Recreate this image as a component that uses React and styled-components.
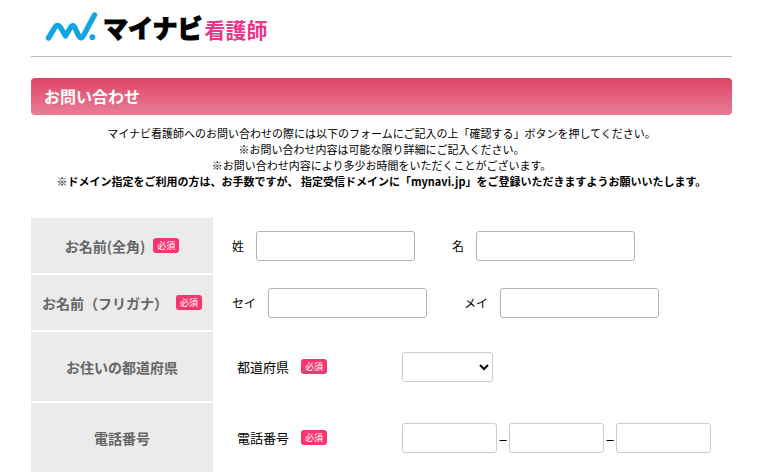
import React from 'react';
import styled, { createGlobalStyle } from 'styled-components';

const GlobalStyle = createGlobalStyle`
  * {
    box-sizing: border-box;
  }

  body {
    margin: 0;
    background-color: #fff;
    color: #000;
    font-family: 'Noto Sans CJK JP', 'Noto Sans', sans-serif;
    font-size: 12px;
  }
`;

const Page = styled.div`
  padding: 0 30px 0 31px;
`;

const Header = styled.header`
  height: 57px;
  border-bottom: 1px solid #bbb;
`;

const Logo = styled.a`
  display: inline-flex;
  align-items: center;
  height: 54px;
  padding-left: 14px;
  color: #000;
  text-decoration: none;
  white-space: nowrap;
`;

const LogoMark = styled.svg`
  width: 54px;
  height: 32px;
  margin-right: 4px;
`;

const LogoName = styled.span`
  font-size: 25px;
  font-weight: 900;
  line-height: 32px;
  -webkit-text-stroke: 1px #000;
`;

const LogoService = styled.span`
  margin-left: 2px;
  padding-top: 4px;
  color: #e7378b;
  font-size: 21px;
  font-weight: 700;
  line-height: 32px;
`;

const Title = styled.h1`
  margin: 21px 0 10px;
  padding: 0 13px;
  border-radius: 4px;
  background: linear-gradient(#de4565, #e87d98);
  color: #fff;
  font-size: 16px;
  font-weight: 700;
  line-height: 37px;
`;

const Lead = styled.p`
  margin: 0 0 29px;
  font-size: 11px;
  line-height: 16px;
  text-align: center;
`;

const Form = styled.form`
  display: grid;
  gap: 2px;
`;

const Row = styled.div`
  display: grid;
  grid-template-columns: 182px 1fr;
  min-height: ${({ $tall }) => ($tall ? '69px' : '55px')};
`;

const RowHead = styled.div`
  display: flex;
  align-items: center;
  justify-content: center;
  gap: 8px;
  background-color: #ebebeb;
  color: #666;
  font-size: 14px;
  font-weight: 700;
  white-space: nowrap;
`;

const RowBody = styled.div`
  display: flex;
  align-items: center;
  padding-left: ${({ $inset }) => ($inset ? '24px' : '19px')};
`;

const Badge = styled.span`
  padding: 0 4px;
  border-radius: 3px;
  background-color: #f8356f;
  color: #fff;
  font-size: 9px;
  font-weight: 400;
  line-height: 15px;
`;

const NameField = styled.label`
  display: flex;
  align-items: center;
  gap: 12px;

  & + & {
    margin-left: 37px;
  }
`;

const FieldLabel = styled.label`
  display: flex;
  align-items: center;
  gap: 12px;
  width: 165px;
  font-size: 13px;
`;

const Input = styled.input`
  width: ${({ $short }) => ($short ? '95px' : '159px')};
  height: 30px;
  padding: 0 6px;
  border: 1px solid ${({ $short }) => ($short ? '#ccc' : '#b4b4b4')};
  border-radius: 3px;
  background-color: #fff;
  font: inherit;
`;

const Select = styled.select`
  width: 91px;
  height: 30px;
  border: 1px solid #ccc;
  border-radius: 3px;
  background-color: #fff;
  color: #000;
  font: inherit;
`;

const Dash = styled.span`
  width: 12px;
  font-size: 16px;
  line-height: 16px;
  text-align: center;
`;

const nameRows = [
  { title: 'お名前(全角)', fields: [['sei', '姓'], ['mei', '名']] },
  { title: 'お名前（フリガナ）', fields: [['seiKana', 'セイ'], ['meiKana', 'メイ']] },
];

const Required = () => <Badge>必須</Badge>;

const App = () => (
  <>
    <GlobalStyle />
    <Page>
      <Header>
        <Logo href="#">
          <LogoMark viewBox="0 0 54 32" aria-hidden="true">
            <path
              d="M3.5 27 L9.5 17 Q12.5 12 15.5 16.5 L20.5 25 L25.5 16.5 Q28 12.5 30 17 L33.5 24.5 Q36 29 38.5 24.5 L49.5 4"
              fill="none"
              stroke="#12a5e3"
              strokeWidth="5.4"
              strokeLinecap="round"
              strokeLinejoin="round"
            />
            <circle cx="47.4" cy="26.2" r="2.9" fill="#12a5e3" />
          </LogoMark>
          <LogoName>マイナビ</LogoName>
          <LogoService>看護師</LogoService>
        </Logo>
      </Header>

      <Title>お問い合わせ</Title>
      <Lead>
        マイナビ看護師へのお問い合わせの際には以下のフォームにご記入の上「確認する」ボタンを押してください。
        <br />
        ※お問い合わせ内容は可能な限り詳細にご記入ください。
        <br />
        ※お問い合わせ内容により多少お時間をいただくことがございます。
        <br />
        <b>※ドメイン指定をご利用の方は、お手数ですが、 指定受信ドメインに「mynavi.jp」をご登録いただきますようお願いいたします。</b>
      </Lead>

      <Form>
        {nameRows.map(({ title, fields }) => (
          <Row key={title}>
            <RowHead>
              {title}
              <Required />
            </RowHead>
            <RowBody>
              {fields.map(([name, label]) => (
                <NameField key={name}>
                  {label}
                  <Input type="text" name={name} />
                </NameField>
              ))}
            </RowBody>
          </Row>
        ))}
        <Row $tall>
          <RowHead>お住いの都道府県</RowHead>
          <RowBody $inset>
            <FieldLabel htmlFor="prefecture">
              都道府県
              <Required />
            </FieldLabel>
            <Select id="prefecture" name="prefecture" />
          </RowBody>
        </Row>
        <Row $tall>
          <RowHead>電話番号</RowHead>
          <RowBody $inset>
            <FieldLabel htmlFor="tel1">
              電話番号
              <Required />
            </FieldLabel>
            <Input $short type="tel" id="tel1" name="tel1" />
            <Dash>–</Dash>
            <Input $short type="tel" name="tel2" aria-label="電話番号（2番目）" />
            <Dash>–</Dash>
            <Input $short type="tel" name="tel3" aria-label="電話番号（3番目）" />
          </RowBody>
        </Row>
      </Form>
    </Page>
  </>
);

export default App;
